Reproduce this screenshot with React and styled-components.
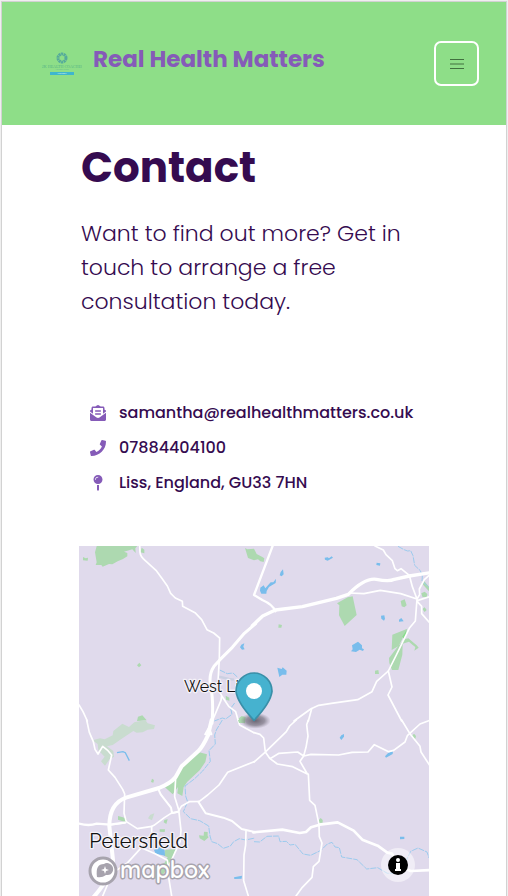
import React from "react";
import styled, { createGlobalStyle } from "styled-components";
import { FaEnvelopeOpenText, FaPhone, FaMapPin } from "react-icons/fa";

const GlobalStyle = createGlobalStyle`
  *, *::before, *::after { box-sizing: border-box; }
  body {
    margin: 0;
    background: #fff;
    color: #350b50;
    font-family: Poppins, Inter, "Open Sans", sans-serif;
  }
`;

const Page = styled.div`
  border: 1px solid #efefef;
  border-bottom: 0;
`;

const Frame = styled.div`
  border: 1px solid #d2d2d2;
  border-bottom: 0;
`;

const Header = styled.header`
  display: flex;
  align-items: center;
  justify-content: space-between;
  padding: 39px 27px 39px 40px;
  background: #8ede88;
`;

const Brand = styled.a`
  display: flex;
  align-items: flex-start;
  gap: 11px;
  padding-bottom: 8px;
  color: #855bb8;
  text-decoration: none;
`;

const BrandLogo = styled.svg`
  width: 40px;
  height: 26px;
  margin-top: 11px;
`;

const BrandName = styled.span`
  font-size: 23px;
  font-weight: 700;
  line-height: 36px;
`;

const MenuButton = styled.button`
  display: flex;
  align-items: center;
  justify-content: center;
  width: 45px;
  height: 45px;
  padding: 0;
  background: transparent;
  border: 2px solid #fff;
  border-radius: 7px;
  cursor: pointer;
`;

const Main = styled.main`
  padding: 0 77px;
`;

const Intro = styled.section`
  padding: 14px 2px 0;
`;

const Title = styled.h1`
  margin: 0;
  font-size: 42px;
  font-weight: 700;
  line-height: 58px;
`;

const Lead = styled.p`
  margin: 20px 0 0;
  font-size: 22px;
  font-weight: 300;
  line-height: 34px;
`;

const ContactList = styled.ul`
  display: grid;
  gap: 11px;
  margin: 82px 0 51px;
  padding: 0 0 0 11px;
  list-style: none;
  font-size: 16px;
  font-weight: 500;
  line-height: 24px;
`;

const ContactItem = styled.li`
  display: flex;
  align-items: center;
  gap: 13px;
  white-space: nowrap;
  svg {
    flex: none;
    width: 16px;
    height: 16px;
    color: #855bb8;
  }
`;

const ContactLink = styled.a`
  color: inherit;
  text-decoration: none;
`;

const MapBox = styled.section`
  position: relative;
  aspect-ratio: 1;
  overflow: hidden;
  background: #e0daec;
`;

const MapDrawing = styled.svg`
  display: block;
  width: 100%;
  height: 100%;
`;

const MapLabel = styled.text`
  font-family: Raleway, Lato, sans-serif;
  font-size: ${(p) => p.$size}px;
  fill: #111;
  stroke: #f4f1f8;
  stroke-width: 8px;
  stroke-linejoin: round;
  paint-order: stroke;
`;

const MapboxLink = styled.a`
  position: absolute;
  left: 8px;
  bottom: 8px;
  display: block;
`;

const MapboxLogo = styled.svg`
  display: block;
  width: 128px;
  height: 34px;
  text {
    font-family: Quicksand, Nunito, Poppins, sans-serif;
    font-size: 23px;
    font-weight: 600;
    fill: #fff;
    stroke: #a7a3ad;
    stroke-width: 3px;
    stroke-linejoin: round;
    paint-order: stroke;
  }
`;

const InfoButton = styled.button`
  position: absolute;
  right: 14px;
  bottom: 14px;
  display: grid;
  place-items: center;
  width: 34px;
  height: 34px;
  padding: 0;
  border: 0;
  border-radius: 50%;
  background: rgba(255, 255, 255, 0.5);
  cursor: pointer;
`;

const Park = styled.path`
  fill: ${(p) => (p.$pale ? "#c9dccf" : "#add9b0")};
`;

const Water = styled.path`
  fill: #79bdec;
`;

const Stream = styled.path`
  fill: none;
  stroke: #9ccbee;
  stroke-width: 3px;
  stroke-dasharray: 18 3;
`;

const Road = styled.path`
  fill: none;
  stroke: #fff;
  stroke-width: ${(p) => p.$width || 5}px;
  stroke-linejoin: round;
  stroke-linecap: round;
`;

function Logo() {
  return (
    <BrandLogo viewBox="0 0 40 26" aria-hidden="true">
      <circle cx="20" cy="6" r="4" fill="none" stroke="#55aa9b" strokeWidth="3" strokeDasharray="2 0.5" />
      <text x="20" y="16" fontFamily="Liberation Serif" fontSize="4" textAnchor="middle" fill="#55b487">UK HEALTH COACHES</text>
      <text x="20" y="18" fontFamily="Liberation Sans" fontSize="2" textAnchor="middle" fill="#68bd90">ASSOCIATION</text>
      <rect x="8" y="20" width="24" height="3" fill="#3fb6ce" />
      <text x="20" y="22" fontFamily="Liberation Sans" fontSize="2" textAnchor="middle" fill="#d8f2ee">MEMBER</text>
    </BrandLogo>
  );
}

function NorthWest() {
  return (
    <g>
      <Park d="M54 0L48 22 53 52 50 60 67 60 71 65 90 57 100 58 116 49 132 42 145 34 145 24 135 20 160 13 170 24 169 10 177 0ZM188 8L196 14 196 25 184 22ZM12 36L20 40 27 38 26 47 12 46ZM181 353L187 361 180 367 174 361ZM174 528L177 515 190 511 203 526ZM440 452L451 458 451 467 441 464ZM477 522L488 513 500 516 498 535 480 532Z" />
      <Water d="M496 295L493 305 497 313 489 314 483 307 487 299Z" />
      <Stream d="M422 375L445 386 462 384 476 397M467 474L455 490 459 508 440 522 430 519 406 528" />
      <path d="M420 395L450 402 465 404" fill="none" stroke="#cbd0e2" strokeWidth="7" />
      <Road d="M182 0L183 22Q184 34 198 46L231 76 248 99 265 123 275 145 289 159 310 169 311 184 348 203 368 224 384 254 404 264 422 279 421 340 416 430" />
      <Road d="M400 528L426 466 428 452 416 430M428 452L450 485 470 500 478 528 482 540 500 550 525 563" />
      <Road $width={9} d="M530 236L496 265 460 307 423 344 405 364Q387 390 396 430Q404 470 399 535" />
      <Road d="M0 480L12 500 25 528" />
    </g>
  );
}

function NorthEast() {
  return (
    <g transform="translate(525 0)">
      <Park d="M-27 9L-20 13 0 11 8 27 25 36 31 40 29 51 19 49 12 43 0 46-18 39ZM249 175L281 157 296 154 308 210 272 243 255 211 256 181ZM440 168L452 163 458 181 451 187 443 184ZM502 145L512 140 520 147 518 158 505 155ZM508 105L525 125 525 139 507 119ZM505 192L512 187 518 195 512 201ZM74 238L84 240 82 248 73 248ZM363 377L373 375 375 387 363 387ZM460 251L415 269 413 315 434 303ZM430 307L405 339 406 354 414 375 433 375 445 329 446 296 465 290 476 300 484 306 481 317 494 308 488 301 463 280 452 282Z" />
      <path d="M458 254L446 274 448 281 457 267Z" fill="#87dd8b" />
      <Water d="M87 73L89 88 83 94 77 91 80 81ZM66 101L65 114 45 126 38 138 37 146 22 146 18 137 19 128 29 121 34 130 50 112 58 112ZM212 38L221 37 225 40 233 34 237 38 221 47 213 44ZM368 53L379 55 378 62 367 60ZM312 290L324 301 324 310 330 313 327 318 317 314 306 321 291 319 296 313 294 301ZM381 212L391 211 393 221 390 227 382 221ZM435 224L442 219 449 229 435 230ZM70 368L83 372 86 367 98 377 97 389 85 389 76 396Z" />
      <Stream d="M432 4L450 14 461 18 470 17 477 32 482 61 499 77 505 93 504 108 525 127" />
      <Road $width={7} d="M57 0L0 150 25 165Q57 179 64 199" />
      <Road $width={10} d="M-5 242L26 213 64 195 145 185 247 160 283 148Q332 98 367 103Q406 111 421 103L466 93 530 83" />
      <Road d="M363 3L388 15 396 29 415 47 423 71 430 77 441 71 466 91 475 125 489 162 484 228 467 248 427 330 403 378 368 409 354 440 311 464 232 475 194 481 170 492 120 528M489 162L440 146 379 136 330 146 287 144M489 162L497 149 496 132 511 104 530 87M492 166L529 154M490 170L503 184 503 206 530 237" />
      <Road d="M403 378L414 426 402 450 443 528M173 491L163 528" />
    </g>
  );
}

function SouthWest() {
  return (
    <g transform="translate(0 525)">
      <Park $pale d="M40 61L63 55 77 58 101 46 103 33 130 11 150 21 166 7 199 0 206 10 228 16 225 27 206 29 191 37 173 38 163 33 128 56 101 75 84 79 103 93 105 111 94 115 78 137 66 124 77 110 58 91 56 72ZM214 284L226 280 219 301 207 295Z" />
      <Park d="M358 96L384 103 379 126 362 151 325 185 314 201 310 228 295 220 297 201 281 223 258 202 286 180 303 151 330 120ZM219 176L225 180 223 188 216 186ZM117 288L132 292 143 297 140 307 117 299ZM256 300L266 298 262 312 254 307ZM242 328L258 328 257 336 242 335ZM375 335L386 336 386 348 389 352 376 363 362 355 360 346 374 347ZM259 389L290 387 278 418 260 452 240 480 223 474 224 444 257 428 266 412 255 407ZM477 0H498L493 9 480 9Z" />
      <Water d="M225 390L248 378 257 391 258 407 230 401ZM465 472L489 467 488 476 466 477Z" />
      <Stream d="M430 0L412 30 407 45 409 72 390 92 394 124 371 153 346 177 318 198 320 228 326 246 313 275 335 296 362 302 389 318 393 348 398 365 416 371 433 385 454 378 464 365 481 356 500 360 528 354" />
      <path d="M114 98L132 95 139 98 151 122" fill="none" stroke="#79bdec" strokeWidth="4" />
      <Road $width={5} d="M23 0L31 37 43 65 48 88 57 102 71 79 87 92 98 105 88 150 108 172 131 208 137 222 135 280 142 305 175 326 219 319 225 316 256 293 276 280 297 276 307 259 331 245 361 244 386 225 420 195 446 157 525 125" />
      <Road $width={6} d="M240 212L245 223 276 263 279 279 297 275M358 245L380 280 433 293 459 303 488 327 530 337" />
      <Road $width={12} d="M398 0L387 46Q371 80 359 92L308 139 290 171Q275 190 240 204L141 233Q91 251 91 318L102 420Q101 465 45 530" />
      <Road $width={7} d="M0 311Q30 319 53 311L93 314 137 308" />
      <Road d="M290 173L287 230 299 269 306 331 303 365 279 417 265 448 278 528M501 333L500 375 495 405 494 482 508 528M190 350L187 383 230 402 265 421 269 446M187 383L146 428 100 460 71 528M218 319V350M140 308L92 315M388 25L378 43 398 43 392 28" />
    </g>
  );
}

function SouthEast() {
  return (
    <g transform="translate(525 525)">
      <Park d="M195 300L200 294 206 300 206 308 194 309ZM474 48L480 41 486 48 484 56 478 57Z" />
      <Water d="M270 42L270 50 262 60 257 53 262 46ZM417 94L416 102 396 113 393 109 403 98ZM438 350L451 350 451 357 438 358Z" />
      <Stream d="M0 365L17 366 39 349 74 348 78 365 97 364 108 375 123 373 147 402 170 406 201 391 220 372 234 367 243 381 256 383 263 411 309 419 338 447 371 443 400 460 430 459 448 440 470 394 492 384 519 396 525 414" />
      <Road d="M0 38L18 43 29 54 34 96 48 116 70 132 116 140 160 162 138 124 149 108 156 82 162 48 158 14 163 0M0 126L33 97 97 35 107 18 127 0M48 116L75 100 131 96 149 108 171 103 254 105 294 97 342 96 361 74 404 95 419 91 453 66 460 47 498 12 530 0M443 0L469 43 498 79 501 96 527 136M163 162L167 241 183 256 195 314 196 350 204 369 195 424 178 440 174 472 145 502 126 528" />
      <Road $width={8} d="M-2 337L85 329 137 339 156 336 171 322 197 314 251 307 299 332 325 359 371 377 400 398 414 401 440 440 470 453 530 450" />
    </g>
  );
}

function Pin() {
  return (
    <g>
      <radialGradient id="pinShadow">
        <stop offset="0" stopColor="#39343f" stopOpacity="0.7" />
        <stop offset="0.6" stopColor="#5c5764" stopOpacity="0.55" />
        <stop offset="1" stopColor="#777080" stopOpacity="0" />
      </radialGradient>
      <ellipse cx="529" cy="527" rx="46" ry="24" fill="url(#pinShadow)" />
      <path d="M525 526Q475 473 471 439A54 55 0 1 1 579 439Q575 473 525 526Z" fill="#46b2cf" stroke="#398fa8" strokeWidth="5" strokeLinejoin="round" />
      <circle cx="525" cy="438" r="24" fill="#fff" />
    </g>
  );
}

function LocationMap() {
  return (
    <MapBox aria-label="Map">
      <MapDrawing viewBox="0 3 1050 1050" role="img" aria-label="Map of Liss and Petersfield">
        <NorthWest />
        <NorthEast />
        <SouthWest />
        <SouthEast />
        <MapLabel x="315" y="441" $size={48}>West Liss</MapLabel>
        <MapLabel x="31" y="909" $size={60}>Petersfield</MapLabel>
        <Pin />
      </MapDrawing>
      <MapboxLink href="https://www.mapbox.com/" aria-label="Mapbox homepage">
        <MapboxLogo viewBox="0 0 128 34">
          <circle cx="16" cy="17" r="13" fill="#fff" stroke="#a7a3ad" strokeWidth="3" />
          <path d="M10 23Q8 10 17 10A6 6 0 1 1 19 21Q15 24 10 23Z" fill="#a7a3ad" />
          <path d="M18 12L19 15 22 16 19 17 18 20 17 17 14 16 17 15Z" fill="#fff" />
          <text x="33" y="24">mapbox</text>
        </MapboxLogo>
      </MapboxLink>
      <InfoButton type="button" aria-label="Toggle attribution">
        <svg width="20" height="20" viewBox="0 0 20 20" aria-hidden="true">
          <circle cx="10" cy="10" r="10" fill="#000" />
          <circle cx="10" cy="5" r="2" fill="#fff" />
          <path d="M8 8H12V14H13V16H7V14H8Z" fill="#fff" />
        </svg>
      </InfoButton>
    </MapBox>
  );
}

export default function App() {
  return (
    <Page>
      <GlobalStyle />
      <Frame>
        <Header>
          <Brand href="/">
            <Logo />
            <BrandName>Real Health Matters</BrandName>
          </Brand>
          <MenuButton type="button" aria-label="Open menu">
            <svg width="14" height="12" viewBox="0 0 14 12" aria-hidden="true">
              <path d="M0 1.5H14M0 6H14M0 10.5H14" stroke="#41703f" strokeWidth="1" />
            </svg>
          </MenuButton>
        </Header>
        <Main>
          <Intro>
            <Title>Contact</Title>
            <Lead>Want to find out more? Get in touch to arrange a free consultation today.</Lead>
          </Intro>
          <ContactList>
            <ContactItem>
              <FaEnvelopeOpenText aria-hidden="true" />
              <ContactLink href="mailto:samantha@realhealthmatters.co.uk">samantha@realhealthmatters.co.uk</ContactLink>
            </ContactItem>
            <ContactItem>
              <FaPhone aria-hidden="true" />
              <ContactLink href="tel:07884404100">07884404100</ContactLink>
            </ContactItem>
            <ContactItem>
              <FaMapPin aria-hidden="true" />
              <span>Liss, England, GU33 7HN</span>
            </ContactItem>
          </ContactList>
          <LocationMap />
        </Main>
      </Frame>
    </Page>
  );
}
